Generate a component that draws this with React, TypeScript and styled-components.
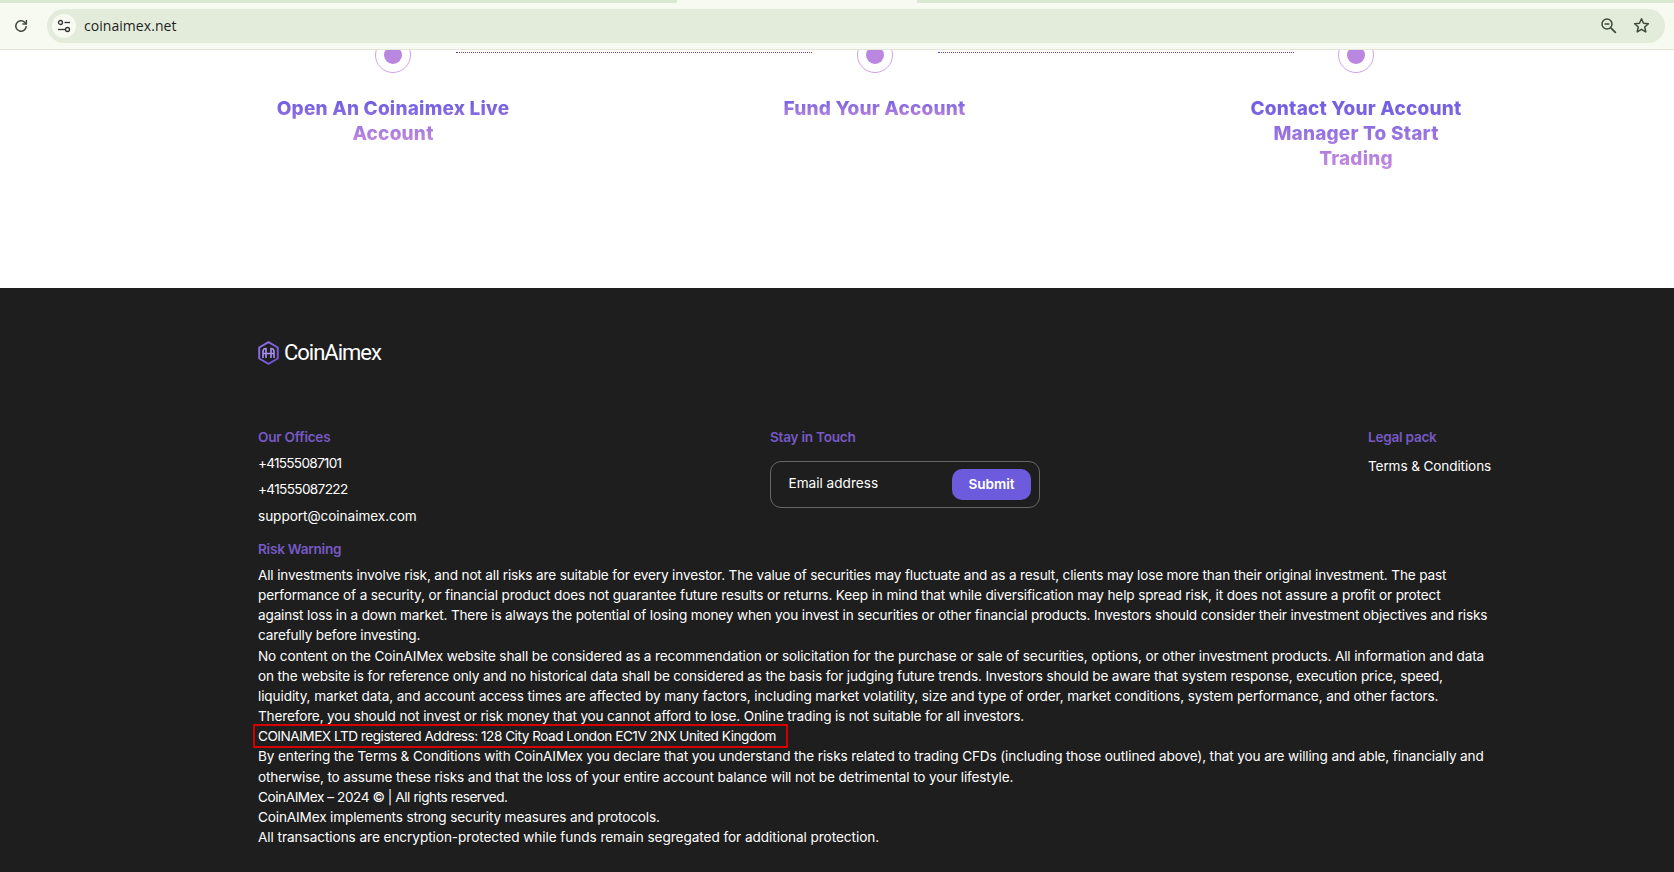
import React from "react";
import styled, { createGlobalStyle } from "styled-components";

const Global = createGlobalStyle`
  html, body { margin: 0; padding: 0; background: #fff; }
  body { font-family: "Inter", "Liberation Sans", sans-serif; overflow: hidden; }
  * { box-sizing: border-box; }
`;
const Page = styled.div`
  width: 1674px; height: 872px; overflow: hidden; display: flex; flex-direction: column;
`;
const Chrome = styled.header`
  position: relative; z-index: 2; height: 50px; flex: none; background: #f7faf1;
  border-bottom: 1px solid #e2e6d8; display: flex; flex-direction: column;
`;
const TabStrip = styled.div`
  height: 3px; margin-bottom: 6px; background: linear-gradient(90deg, #d9e8d0 0 677px, #f7faf1 677px 917px, #d9e8d0 917px);
`;
const ToolRow = styled.div`
  display: flex; align-items: center; padding: 0 9px 0 9px; height: 34px; gap: 14px;
`;
const IconBtn = styled.div`
  width: 24px; height: 24px; display: flex; align-items: center; justify-content: center; color: #3f4a3c; flex: none;
`;
const Omnibox = styled.div`
  flex: 1; height: 34px; border-radius: 17px; background: #e3ecdb; display: flex; align-items: center; padding: 0 12px 0 5px;
`;
const SiteChip = styled.div`
  width: 24px; height: 24px; border-radius: 50%; background: #f7faf1; display: flex; align-items: center; justify-content: center; color: #333;
`;
const Url = styled.div`
  margin: -2px 0 0 8px; flex: 1; font-family: "Open Sans", sans-serif; font-size: 14px; color: #1f1f1f; letter-spacing: .05px;
`;
const OmniActions = styled.div`
  display: flex; align-items: center; gap: 9px; color: #3f4a3c; margin-top: -2px;
`;
const Steps = styled.section`
  height: 238px; flex: none; background: #fff; display: grid; grid-template-columns: repeat(3, 256px);
  justify-content: space-between; padding: 0 190px 0 265px;
`;
const Step = styled.div`
  position: relative; display: flex; flex-direction: column; align-items: center;
`;
const Ring = styled.div`
  width: 36px; height: 36px; margin-top: -13px; border-radius: 50%; border: 1px solid #cfa2e8; display: flex; align-items: center; justify-content: center; flex: none; background: #fff;
`;
const Dot = styled.div`
  width: 18px; height: 18px; border-radius: 50%; background: #b986e0;
`;
const Connector = styled.div`
  position: absolute; top: 2px; left: 191px; width: 356px; border-top: 1px dotted #5a3fe0;
`;
const StepTitle = styled.h3`
  margin: 23px 0 0; width: 256px; font-size: 19px; line-height: 25px; font-weight: 800; text-align: center; letter-spacing: .2px;
  background: linear-gradient(180deg, #7460e2 15%, #c98ddd 100%);
  -webkit-background-clip: text; background-clip: text; color: transparent;
`;
const Footer = styled.footer`
  flex: 1; background: #1e1e1e; color: #fff; padding: 51px 182px 0 258px; font-size: 13.6px; line-height: 20px;
`;
const Brand = styled.div`
  display: flex; align-items: center; gap: 5px; height: 28px;
`;
const BrandName = styled.div`
  font-family: "Roboto", sans-serif; font-size: 22px; font-weight: 400; letter-spacing: -1px; color: #fff;
`;
const Columns = styled.div`
  display: flex; margin-top: 60px; height: 112px;
`;
const Col = styled.div<{ $w: number }>`
  width: ${p => p.$w}px; flex: none; display: flex; flex-direction: column;
`;
const Heading = styled.div`
  color: #7659c4; font-weight: 600; font-size: 13.6px; line-height: 20px; letter-spacing: -.25px;
`;
const ContactList = styled.div`
  margin-top: 5.5px; display: flex; flex-direction: column; gap: 6.7px;
`;
const ContactItem = styled.div<{ $ls: number }>`
  letter-spacing: ${p => p.$ls}px;
`;
const EmailForm = styled.form`
  margin-top: 14px; width: 270px; height: 47px; border: 1px solid #666; border-radius: 11px; display: flex; align-items: center; justify-content: space-between; padding: 0 8px 0 17.5px;
`;
const EmailLabel = styled.span`
  margin-top: -3px;
`;
const Submit = styled.button`
  width: 79px; height: 31px; border: 0; border-radius: 10px; padding: 0 0 2px; background: #6c5bdc; color: #fff; font: 600 13.6px "Inter", sans-serif;
`;
const LegalLink = styled.div`
  margin-top: 9px; white-space: nowrap; letter-spacing: -.12px;
`;
const RiskBody = styled.div`
  margin-top: 6px; line-height: 20.15px;
`;
const Line = styled.div<{ $mark?: boolean; $ls: number }>`
  white-space: nowrap; width: fit-content; letter-spacing: ${p => p.$ls}px;
  ${p => p.$mark ? "outline: 2px solid #d40000; outline-offset: 0; padding: 0 10px 0 3px; margin-left: -3px;" : ""}
`;

const lines: [string, number, boolean?][] = [
  ["All investments involve risk, and not all risks are suitable for every investor. The value of securities may fluctuate and as a result, clients may lose more than their original investment. The past", -.16],
  ["performance of a security, or financial product does not guarantee future results or returns. Keep in mind that while diversification may help spread risk, it does not assure a profit or protect", -.143],
  ["against loss in a down market. There is always the potential of losing money when you invest in securities or other financial products. Investors should consider their investment objectives and risks", -.163],
  ["carefully before investing.", -.17],
  ["No content on the CoinAIMex website shall be considered as a recommendation or solicitation for the purchase or sale of securities, options, or other investment products. All information and data", -.134],
  ["on the website is for reference only and no historical data shall be considered as the basis for judging future trends. Investors should be aware that system response, execution price, speed,", -.154],
  ["liquidity, market data, and account access times are affected by many factors, including market volatility, size and type of order, market conditions, system performance, and other factors.", -.11],
  ["Therefore, you should not invest or risk money that you cannot afford to lose. Online trading is not suitable for all investors.", -.17],
  ["COINAIMEX LTD registered Address: 128 City Road London EC1V 2NX United Kingdom", -.48, true],
  ["By entering the Terms & Conditions with CoinAIMex you declare that you understand the risks related to trading CFDs (including those outlined above), that you are willing and able, financially and", -.13],
  ["otherwise, to assume these risks and that the loss of your entire account balance will not be detrimental to your lifestyle.", -.145],
  ["CoinAIMex – 2024 © | All rights reserved.", -.43],
  ["CoinAIMex implements strong security measures and protocols.", -.147],
  ["All transactions are encryption-protected while funds remain segregated for additional protection.", -.06],
];

const Logo = () => (
  <svg width="21" height="24" viewBox="0 0 21 24" fill="none">
    <defs>
      <linearGradient id="hexStroke" x1="0" y1="0" x2="1" y2="1">
        <stop offset="0" stopColor="#8f6ff0" />
        <stop offset="1" stopColor="#6a4fc8" />
      </linearGradient>
    </defs>
    <path d="M10.5 1.2 19.8 6.5V17.5L10.5 22.8 1.2 17.5V6.5Z" stroke="url(#hexStroke)" strokeWidth="2" strokeLinejoin="round" />
    <path d="M5 17V10.5Q5 7.5 8 7.5V17M5 12.5H8M16 17V10.5Q16 7.5 13 7.5V17M13 12.5H16M8 12.5H13" stroke="#a88ff2" strokeWidth="1.6" />
  </svg>
);

export default function App() {
  return (
    <Page>
      <Global />
      <Chrome>
        <TabStrip />
        <ToolRow>
          <IconBtn>
            <svg width="16" height="16" viewBox="0 0 16 16" fill="none" stroke="currentColor" strokeWidth="1.5">
              <path d="M13.2 8a5.2 5.2 0 1 1-1.5-3.7L13.2 5.8" />
              <path d="M13.4 2v4h-4" strokeWidth="1.4" />
            </svg>
          </IconBtn>
          <Omnibox>
            <SiteChip>
              <svg width="16" height="16" viewBox="0 0 16 16" fill="none" stroke="currentColor" strokeWidth="1.3">
                <circle cx="4.5" cy="4.5" r="2" /><path d="M8.5 4.5H14" />
                <circle cx="11.5" cy="11.5" r="2" /><path d="M2 11.5h7.5" />
              </svg>
            </SiteChip>
            <Url>coinaimex.net</Url>
            <OmniActions>
              <IconBtn>
                <svg width="17" height="17" viewBox="0 0 17 17" fill="none" stroke="currentColor" strokeWidth="1.5">
                  <circle cx="7" cy="7" r="5" /><path d="M4.6 7h4.8" /><path d="m10.8 10.8 5 5" strokeWidth="1.8" />
                </svg>
              </IconBtn>
              <IconBtn>
                <svg width="17" height="17" viewBox="0 0 17 17" fill="none" stroke="currentColor" strokeWidth="1.5" strokeLinejoin="round">
                  <path d="M8.5 1.8 10.5 6.3l4.9.5-3.7 3.2 1.1 4.9-4.3-2.6-4.3 2.6 1.1-4.9L1.6 6.8l4.9-.5Z" />
                </svg>
              </IconBtn>
            </OmniActions>
          </Omnibox>
        </ToolRow>
      </Chrome>
      <Steps>
        <Step>
          <Ring><Dot /></Ring>
          <Connector />
          <StepTitle>Open An Coinaimex Live<br />Account</StepTitle>
        </Step>
        <Step>
          <Ring><Dot /></Ring>
          <Connector />
          <StepTitle>Fund Your Account</StepTitle>
        </Step>
        <Step>
          <Ring><Dot /></Ring>
          <StepTitle>Contact Your Account<br />Manager To Start<br />Trading</StepTitle>
        </Step>
      </Steps>
      <Footer>
        <Brand>
          <Logo />
          <BrandName>CoinAimex</BrandName>
        </Brand>
        <Columns>
          <Col $w={512}>
            <Heading>Our Offices</Heading>
            <ContactList>
              <ContactItem $ls={-.74}>+41555087101</ContactItem>
              <ContactItem $ls={-.65}>+41555087222</ContactItem>
              <ContactItem $ls={-.05}>support@coinaimex.com</ContactItem>
            </ContactList>
          </Col>
          <Col $w={598}>
            <Heading>Stay in Touch</Heading>
            <EmailForm>
              <EmailLabel>Email address</EmailLabel>
              <Submit type="button">Submit</Submit>
            </EmailForm>
          </Col>
          <Col $w={124}>
            <Heading>Legal pack</Heading>
            <LegalLink>Terms &amp; Conditions</LegalLink>
          </Col>
        </Columns>
        <Heading>Risk Warning</Heading>
        <RiskBody>
          {lines.map(([t, ls, m], i) => <Line key={i} $ls={ls} $mark={m}>{t}</Line>)}
        </RiskBody>
      </Footer>
    </Page>
  );
}
